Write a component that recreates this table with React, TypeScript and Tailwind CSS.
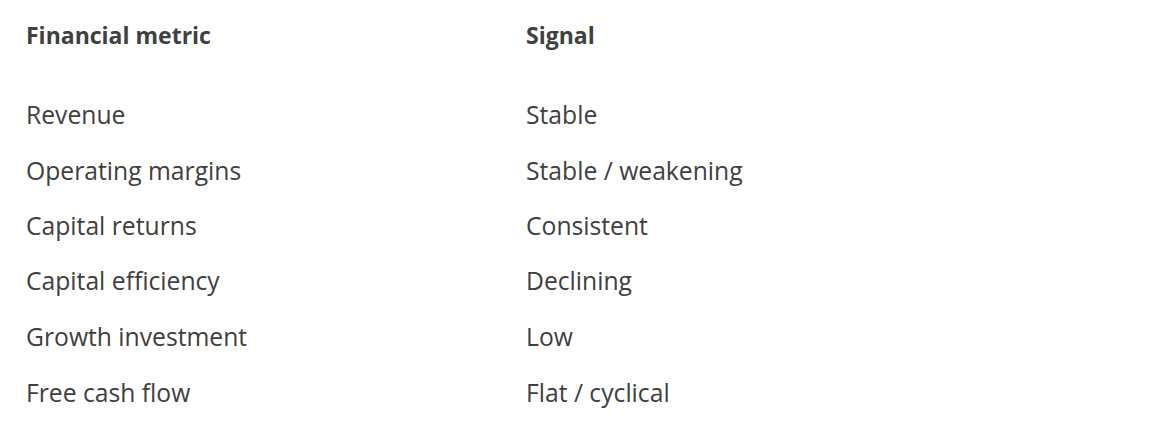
const rows: { metric: string; signal: string; h: string }[] = [
  { metric: 'Revenue', signal: 'Stable', h: 'h-[56px]' },
  { metric: 'Operating margins', signal: 'Stable / weakening', h: 'h-[56px]' },
  { metric: 'Capital returns', signal: 'Consistent', h: 'h-[53px]' },
  { metric: 'Capital efficiency', signal: 'Declining', h: 'h-[57px]' },
  { metric: 'Growth investment', signal: 'Low', h: 'h-[56px]' },
  { metric: 'Free cash flow', signal: 'Flat / cyclical', h: 'h-[56px]' },
]

export default function App() {
  return (
    <div className="w-[1174px] h-[446px] bg-white text-[#404040] font-['Open_Sans',sans-serif] pl-[26px] pt-[18px]">
      <div className="grid grid-cols-[500px_1fr] h-[30px] items-center text-[23px] font-bold mb-[39px]">
        <span>Financial metric</span>
        <span>Signal</span>
      </div>
      {rows.map((r) => (
        <div key={r.metric} className={`grid grid-cols-[500px_1fr] items-center text-[24.7px] ${r.h}`}>
          <span>{r.metric}</span>
          <span>{r.signal}</span>
        </div>
      ))}
    </div>
  )
}
